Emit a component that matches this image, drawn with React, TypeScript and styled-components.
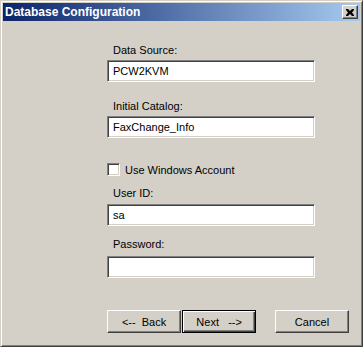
import styled, { createGlobalStyle } from "styled-components";

const GlobalStyle = createGlobalStyle`
  html, body {
    margin: 0;
    padding: 0;
    background: #d4d0c8;
  }
  body {
    font-family: "Liberation Sans", Arial, sans-serif;
    font-size: 11px;
  }
`;

const FONT = `"Liberation Sans", Arial, sans-serif`;

const App = () => {
  return (
    <>
      <GlobalStyle />
      <Window>
        <TitleBar>
          <Title>Database Configuration</Title>
          <CloseButton aria-label="Close">
            <svg width="8" height="7" viewBox="0 0 8 7">
              <path
                d="M0 0h2l2 2 2-2h2v1L6 3.5 8 6v1H6L4 5 2 7H0V6l2-2.5L0 1z"
                fill="#000"
              />
            </svg>
          </CloseButton>
        </TitleBar>
        <Body>
          <Form>
            <Label $top={23}>Data Source:</Label>
            <TextBox defaultValue="PCW2KVM" $top={3} />
            <Label $top={18}>Initial Catalog:</Label>
            <TextBox defaultValue="FaxChange_Info" $top={3} />
            <CheckRow $top={25}>
              <CheckBox />
              <CheckText>Use Windows Account</CheckText>
            </CheckRow>
            <Label $top={11}>User ID:</Label>
            <TextBox defaultValue="sa" $top={4} />
            <Label $top={12}>Password:</Label>
            <TextBox type="password" defaultValue="" $top={5} />
          </Form>
          <ButtonRow>
            <Button>{"<--  Back"}</Button>
            <Button $default>{"Next   -->"}</Button>
            <Spacer />
            <Button>Cancel</Button>
          </ButtonRow>
        </Body>
      </Window>
    </>
  );
};

const Window = styled.div`
  box-sizing: border-box;
  width: 363px;
  height: 347px;
  display: flex;
  flex-direction: column;
  padding: 2px;
  background: #d4d0c8;
  border: 1px solid;
  border-color: #d4d0c8 #404040 #404040 #d4d0c8;
  box-shadow: inset 1px 1px #ffffff, inset -1px -1px #808080;
`;

const TitleBar = styled.div`
  height: 18px;
  display: flex;
  align-items: center;
  justify-content: space-between;
  padding: 0 2px 0 2px;
  background: linear-gradient(to right, #0a246a, #a6caf0);
`;

const Title = styled.span`
  font-family: ${FONT};
  font-weight: bold;
  font-size: 12px;
  color: #ffffff;
  white-space: nowrap;
`;

const CloseButton = styled.div`
  box-sizing: border-box;
  width: 16px;
  height: 14px;
  display: flex;
  align-items: center;
  justify-content: center;
  background: #d4d0c8;
  border: 1px solid;
  border-color: #ffffff #404040 #404040 #ffffff;
  box-shadow: inset -1px -1px #808080;
`;

const Body = styled.div`
  flex: 1;
  display: flex;
  flex-direction: column;
  padding: 0 11px 0 104px;
`;

const Form = styled.div`
  display: flex;
  flex-direction: column;
  width: 208px;
`;

const Label = styled.div<{ $top: number }>`
  margin-top: ${(p) => p.$top}px;
  padding-left: 6px;
  height: 13px;
  line-height: 13px;
  font-family: ${FONT};
  font-size: 11px;
  color: #000000;
`;

const TextBox = styled.input<{ $top: number }>`
  box-sizing: border-box;
  margin: ${(p) => p.$top}px 0 0 0;
  width: 208px;
  height: 22px;
  padding: 0 5px;
  font-family: ${FONT};
  font-size: 11px;
  color: #000000;
  background: #ffffff;
  border: 1px solid;
  border-color: #808080 #ffffff #ffffff #808080;
  box-shadow: inset 1px 1px #404040, inset -1px -1px #d4d0c8;
  outline: none;
`;

const CheckRow = styled.label<{ $top: number }>`
  margin-top: ${(p) => p.$top}px;
  display: flex;
  align-items: center;
  gap: 5px;
  height: 13px;
`;

const CheckBox = styled.span`
  box-sizing: border-box;
  width: 13px;
  height: 13px;
  background: #ffffff;
  border: 1px solid;
  border-color: #808080 #ffffff #ffffff #808080;
  box-shadow: inset 1px 1px #404040, inset -1px -1px #d4d0c8;
`;

const CheckText = styled.span`
  font-family: ${FONT};
  font-size: 11px;
  color: #000000;
`;

const ButtonRow = styled.div`
  display: flex;
  align-items: center;
  gap: 1px;
  margin-top: 32px;
`;

const Spacer = styled.div`
  width: 17px;
`;

const Button = styled.button<{ $default?: boolean }>`
  box-sizing: border-box;
  width: 75px;
  height: 23px;
  padding: 0;
  white-space: pre;
  font-family: ${FONT};
  font-size: 11px;
  color: #000000;
  background: #d4d0c8;
  border: 1px solid;
  border-color: ${(p) =>
    p.$default ? "#000000" : "#ffffff #404040 #404040 #ffffff"};
  box-shadow: ${(p) =>
    p.$default
      ? "inset 1px 1px #ffffff, inset -1px -1px #404040, inset -2px -2px #808080"
      : "inset -1px -1px #808080"};
`;

export default App;
